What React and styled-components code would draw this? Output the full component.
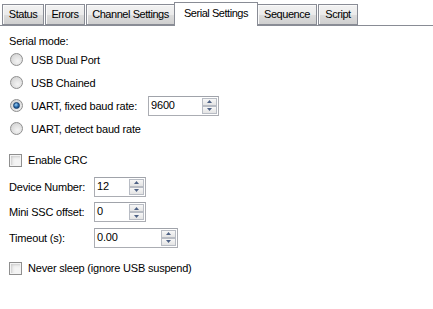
import React from "react";
import styled, { createGlobalStyle } from "styled-components";

const GlobalStyle = createGlobalStyle`
  html, body {
    margin: 0;
    padding: 0;
    background: #ffffff;
  }
  body {
    font-family: "Liberation Sans", Arial, sans-serif;
    font-size: 11px;
    letter-spacing: -0.2px;
    color: #000;
  }
`;

const tabs = [
  { label: "Status", width: 42 },
  { label: "Errors", width: 40 },
  { label: "Channel Settings", width: 89 },
  { label: "Serial Settings", width: 84, active: true },
  { label: "Sequence", width: 60 },
  { label: "Script", width: 40 },
];

const Window = styled.div`
  width: 433px;
  height: 309px;
  background: #ffffff;
  overflow: hidden;
`;

const TabStrip = styled.div`
  display: flex;
  align-items: flex-end;
  height: 25px;
  padding-left: 2px;
  background: #ffffff;
  position: relative;
  z-index: 1;
`;

const Tab = styled.div`
  box-sizing: border-box;
  display: flex;
  justify-content: center;
  flex: none;
  width: ${(p) => p.$w}px;
  height: ${(p) => (p.$active ? "24px" : "21px")};
  margin: ${(p) => (p.$active ? "0 -1px -1px -2px" : "0 1px 0 0")};
  padding-top: ${(p) => (p.$active ? "3px" : "2px")};
  border: 1px solid #898c95;
  border-bottom: ${(p) => (p.$active ? "none" : "1px solid #898c95")};
  background: ${(p) =>
    p.$active
      ? "#ffffff"
      : "linear-gradient(#f2f2f2 0%, #ebebeb 50%, #dddddd 51%, #cfcfcf 100%)"};
  box-shadow: ${(p) => (p.$active ? "none" : "inset 1px 1px 0 #fafafa")};
  white-space: nowrap;
  letter-spacing: -0.45px;
  line-height: 15px;
  z-index: ${(p) => (p.$active ? 2 : 1)};
`;

const Panel = styled.div`
  border-top: 1px solid #898c95;
  padding: 8px 9px 0 9px;
  display: flex;
  flex-direction: column;
`;

const GroupLabel = styled.div`
  height: 14px;
  line-height: 14px;
`;

const OptionRow = styled.label`
  display: flex;
  align-items: center;
  height: 23px;
  gap: 8px;
`;

const Radio = styled.span`
  box-sizing: border-box;
  width: 13px;
  height: 13px;
  margin-left: 1px;
  border-radius: 50%;
  border: 1px solid #8f8f8f;
  background: radial-gradient(circle at 60% 65%, #f4f4f4 0%, #dcdcdc 60%, #c9c9c9 100%);
  display: flex;
  align-items: center;
  justify-content: center;
  flex: none;

  &::after {
    content: "";
    width: 5px;
    height: 5px;
    border-radius: 50%;
    display: ${(p) => (p.$checked ? "block" : "none")};
    background: radial-gradient(circle at 40% 35%, #9fd3f5 0%, #2a6cae 50%, #0b3566 100%);
    border: 1px solid #173f6e;
  }
`;

const Check = styled.span`
  box-sizing: border-box;
  width: 13px;
  height: 13px;
  border: 1px solid #8f8f8f;
  background: #f4f4f4;
  box-shadow: inset 0 0 0 1px #f4f4f4, inset 2px 2px 3px #c8c8c8;
  flex: none;
`;

const OptionText = styled.span`
  line-height: 14px;
  white-space: nowrap;
`;

const BaudBox = styled.div`
  margin-left: 3px;
`;

const CheckRow = styled.label`
  display: flex;
  align-items: center;
  height: 20px;
  gap: 6px;
  margin-top: ${(p) => p.$top}px;
`;

const FieldRow = styled.div`
  display: flex;
  align-items: center;
  height: ${(p) => p.$h || 25}px;
  margin-top: ${(p) => p.$top || 0}px;
`;

const FieldLabel = styled.span`
  width: 85px;
  white-space: nowrap;
`;

const Spin = styled.div`
  box-sizing: border-box;
  display: flex;
  width: ${(p) => p.$w}px;
  height: 20px;
  border: 1px solid #abadb3;
  border-top-color: #a0a3aa;
  background: #fff;
`;

const SpinValue = styled.span`
  flex: 1;
  padding-left: 2px;
  line-height: 17px;
`;

const SpinButtons = styled.div`
  display: flex;
  flex-direction: column;
  width: 15px;
  padding: 1px 1px 1px 0;
`;

const SpinBtn = styled.div`
  flex: 1;
  box-sizing: border-box;
  border: 1px solid #b8bcc4;
  background: linear-gradient(#f7f7f7, #e4e4e4);
  display: flex;
  align-items: center;
  justify-content: center;
`;

function Arrow({ up }) {
  return (
    <svg width="5" height="3" viewBox="0 0 5 3">
      <path d={up ? "M0 3 L2.5 0 L5 3 Z" : "M0 0 L2.5 3 L5 0 Z"} fill="#4d6185" />
    </svg>
  );
}

function SpinBox({ value, width }) {
  return (
    <Spin $w={width}>
      <SpinValue>{value}</SpinValue>
      <SpinButtons>
        <SpinBtn>
          <Arrow up />
        </SpinBtn>
        <SpinBtn>
          <Arrow />
        </SpinBtn>
      </SpinButtons>
    </Spin>
  );
}

export default function App() {
  return (
    <>
      <GlobalStyle />
      <Window>
        <TabStrip>
          {tabs.map((t) => (
            <Tab key={t.label} $w={t.width} $active={t.active}>
              {t.label}
            </Tab>
          ))}
        </TabStrip>
        <Panel>
          <GroupLabel>Serial mode:</GroupLabel>
          <OptionRow>
            <Radio />
            <OptionText>USB Dual Port</OptionText>
          </OptionRow>
          <OptionRow>
            <Radio />
            <OptionText>USB Chained</OptionText>
          </OptionRow>
          <OptionRow>
            <Radio $checked />
            <OptionText>UART, fixed baud rate:</OptionText>
            <BaudBox>
              <SpinBox value="9600" width={71} />
            </BaudBox>
          </OptionRow>
          <OptionRow>
            <Radio />
            <OptionText>UART, detect baud rate</OptionText>
          </OptionRow>

          <CheckRow $top={10}>
            <Check />
            <OptionText>Enable CRC</OptionText>
          </CheckRow>

          <FieldRow $top={4}>
            <FieldLabel>Device Number:</FieldLabel>
            <SpinBox value="12" width={52} />
          </FieldRow>
          <FieldRow $h={26}>
            <FieldLabel>Mini SSC offset:</FieldLabel>
            <SpinBox value="0" width={52} />
          </FieldRow>
          <FieldRow>
            <FieldLabel>Timeout (s):</FieldLabel>
            <SpinBox value="0.00" width={84} />
          </FieldRow>

          <CheckRow $top={8}>
            <Check />
            <OptionText>Never sleep (ignore USB suspend)</OptionText>
          </CheckRow>
        </Panel>
      </Window>
    </>
  );
}
